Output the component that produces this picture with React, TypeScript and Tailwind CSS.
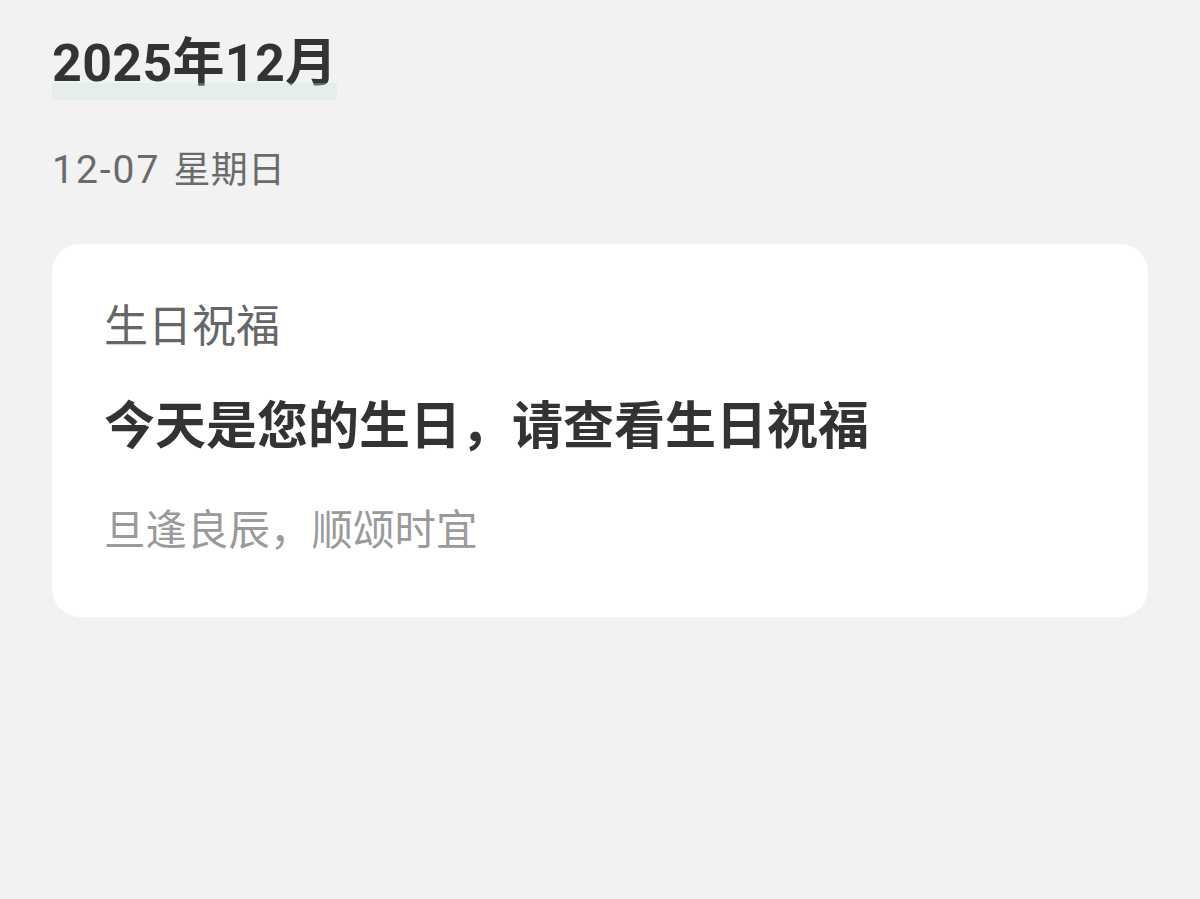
export default function App() {
  return (
    <div
      className="min-h-[899px] bg-[#f2f2f2] px-[52px] pt-[38px]"
      style={{ fontFamily: 'Roboto, "Noto Sans CJK SC", sans-serif' }}
    >
      {/* Month heading with highlight */}
      <div className="relative inline-block">
        <h1 className="text-[52px] leading-[52px] font-bold tracking-[0.3px] text-[#333333]">2025年12月</h1>
        <span className="absolute left-0 right-0 top-[45px] h-[17px] bg-[rgba(200,230,219,0.3)]" />
      </div>

      {/* Date */}
      <p className="mt-[62px] flex items-baseline h-[36px] leading-[36px] text-[#6b6b6b]">
        <span className="text-[39px] tracking-[2px]">12-07</span>
        <span className="ml-[13px] text-[37px] tracking-[0.3px]">星期日</span>
      </p>

      {/* Card */}
      <div className="mt-[56px] rounded-[28px] bg-white px-[52px] pt-[61px] pb-[65px]">
        <p className="text-[44px] leading-[44px] text-[#666666]">生日祝福</p>
        <p className="mt-[52px] text-[51px] leading-[52px] font-bold text-[#333333]">
          今天是您的生日，请查看生日祝福
        </p>
        <p className="mt-[57px] text-[41.5px] leading-[42px] text-[#9a9a9a]">旦逢良辰，顺颂时宜</p>
      </div>
    </div>
  );
}
